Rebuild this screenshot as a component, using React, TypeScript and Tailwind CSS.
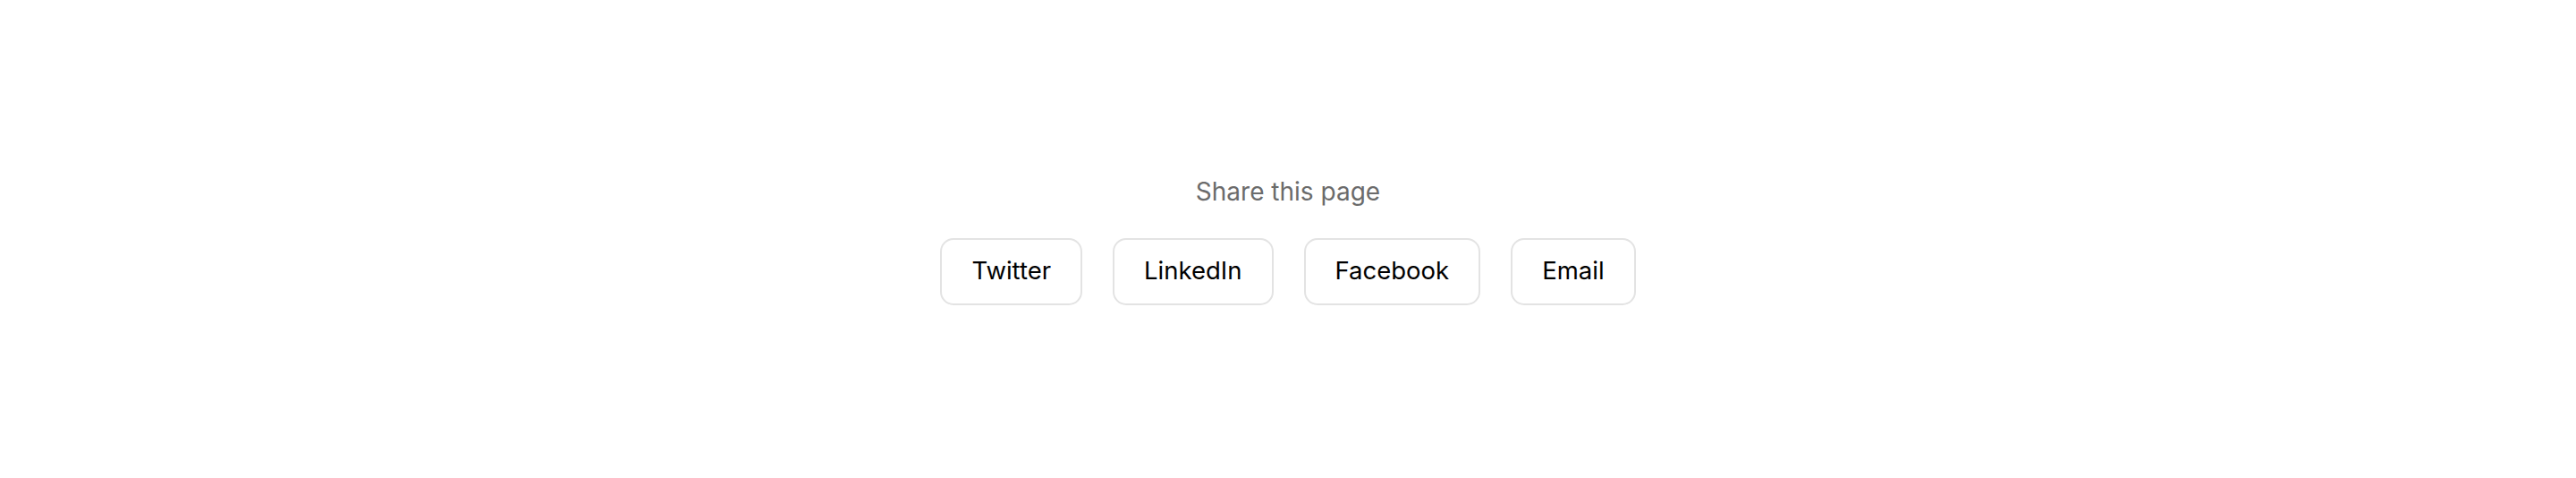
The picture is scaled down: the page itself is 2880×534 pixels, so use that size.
import React from "react";

const LINKS = ["Twitter", "LinkedIn", "Facebook", "Email"];

const SharePage = () => {
  return (
    <div
      className="flex min-h-screen w-full items-center justify-center bg-white"
      style={{ fontFamily: "Inter, 'Noto Sans', sans-serif" }}
    >
      <div className="flex flex-col items-center">
        <p className="text-[28px] leading-[40px] text-[#6b6b6b]">Share this page</p>
        <div className="mt-[32px] flex gap-[34px]">
          {LINKS.map((label) => (
            <button
              key={label}
              type="button"
              className="h-[75px] rounded-[15px] border-[2px] border-[#e3e3e3] bg-white px-[33px] text-[27.5px] font-normal text-black"
            >
              {label}
            </button>
          ))}
        </div>
      </div>
    </div>
  );
};

export default function App() {
  return <SharePage />;
}
